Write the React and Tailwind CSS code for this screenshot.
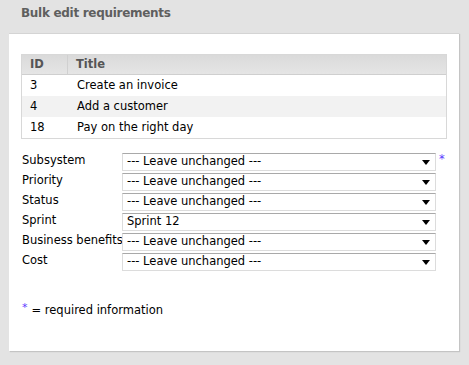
import React from "react";

const fields = [
  ["Subsystem", "--- Leave unchanged ---", true],
  ["Priority", "--- Leave unchanged ---"],
  ["Status", "--- Leave unchanged ---"],
  ["Sprint", "Sprint 12"],
  ["Business benefits", "--- Leave unchanged ---"],
  ["Cost", "--- Leave unchanged ---"],
];

const rows = [
  ["3", "Create an invoice"],
  ["4", "Add a customer"],
  ["18", "Pay on the right day"],
];

function Arrow() {
  return (
    <svg width="8" height="5" viewBox="0 0 8 5" className="shrink-0">
      <path d="M0 0H8L4 5Z" fill="#000" />
    </svg>
  );
}

export default function App() {
  return (
    <div
      className="w-[469px] h-[365px] bg-[#e3e3e3] text-[11.5px] text-black overflow-hidden"
      style={{ fontFamily: '"DejaVu Sans", Verdana, sans-serif' }}
    >
      <div className="pl-[21px] pt-[5px] h-[33px] text-[12px] font-bold text-[#5f5f5f] leading-[16px] tracking-[-0.3px]">
        Bulk edit requirements
      </div>
      <div className="ml-[9px] w-[450px] h-[318px] bg-white border-t border-[#d4d4d4] shadow-[1px_1px_1px_#c4c4c4] px-[12px] pt-[20px]">
        <div className="w-[426px] border border-[#d8d8d8]">
          <div className="flex h-[20px] bg-gradient-to-b from-[#dadada] to-[#e5e5e5] border-b border-[#cfcfcf] font-bold text-[#555] items-center">
            <div className="w-[46px] pl-[8px] border-r border-[#d0d0d0] h-full flex items-center">ID</div>
            <div className="pl-[8px]">Title</div>
          </div>
          {rows.map((r, i) => (
            <div key={r[0]} className={`flex h-[21px] items-center ${i === 1 ? "bg-[#f2f2f2]" : "bg-white"}`}>
              <div className="w-[46px] pl-[8px]">{r[0]}</div>
              <div className="pl-[9px]">{r[1]}</div>
            </div>
          ))}
        </div>
        <div className="mt-[14px] flex flex-col gap-[2px]">
          {fields.map(([label, value, req]) => (
            <div key={label} className="flex h-[18px]">
              <div className="w-[101px] pl-[1px] leading-[13px] pt-[1px] whitespace-nowrap">{label}</div>
              <div className="w-[314px] h-[18px] border border-[#dcdcdc] border-t-[#a9a9a9] flex items-center justify-between pl-[4px] pr-[5px]">
                <span>{value}</span>
                <Arrow />
              </div>
              {req && <span className="ml-[3px] text-[#5b3bff] leading-[12px]">*</span>}
            </div>
          ))}
        </div>
        <div className="mt-[31px] pl-[1px] flex items-center">
          <span className="text-[#5b3bff] text-[11px] mr-[4px] -mt-[5px]">*</span>
          <span>= required information</span>
        </div>
      </div>
    </div>
  );
}
